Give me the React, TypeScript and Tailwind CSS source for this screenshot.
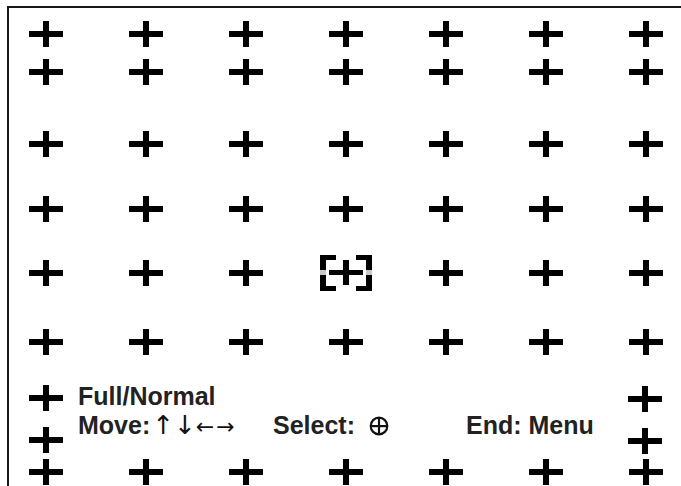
import React from "react";

function Cross() {
  return (
    <svg width="34" height="26" viewBox="0 0 34 26" className="block shrink-0">
      <rect x="0" y="10" width="34" height="6" fill="#000" />
      <rect x="14" y="0" width="6" height="26" fill="#000" />
    </svg>
  );
}

// cursor marker with corner brackets, sits in the middle of the grid
function Marker() {
  return (
    <svg width="52" height="36" viewBox="0 0 52 36" className="block shrink-0">
      <rect x="0" y="0" width="16" height="5" fill="#000" />
      <rect x="0" y="0" width="6" height="15" fill="#000" />
      <rect x="0" y="15" width="6" height="5" fill="#c8c8c8" />
      <rect x="0" y="20" width="6" height="16" fill="#000" />
      <rect x="0" y="31" width="16" height="5" fill="#000" />
      <rect x="36" y="0" width="16" height="5" fill="#000" />
      <rect x="46" y="0" width="6" height="15" fill="#000" />
      <rect x="46" y="15" width="6" height="5" fill="#c8c8c8" />
      <rect x="46" y="20" width="6" height="16" fill="#000" />
      <rect x="36" y="31" width="16" height="5" fill="#000" />
      <rect x="9" y="15" width="34" height="5" fill="#000" />
      <rect x="23" y="5" width="6" height="25" fill="#000" />
    </svg>
  );
}

function Row({ className = "", center }: { className?: string; center?: boolean }) {
  return (
    <div className={`flex h-[26px] w-[654px] items-center justify-between pl-[20px] ${className}`}>
      {[0, 1, 2, 3, 4, 5, 6].map((i) => (
        <div key={i} className="flex h-[26px] w-[34px] items-center justify-center">
          {center && i === 3 ? <Marker /> : <Cross />}
        </div>
      ))}
    </div>
  );
}

export default function App() {
  return (
    <div className="h-[486px] w-[681px] overflow-hidden bg-white font-['Liberation_Sans',Arial,sans-serif]">
      <div className="ml-[7px] mt-[6px] flex h-[480px] flex-col border-l-2 border-t-2 border-[#161616]">
        <Row className="mt-[13px]" />
        <Row className="mt-[12px]" />
        <Row className="mt-[46px]" />
        <Row className="mt-[39px]" />
        <Row className="mt-[38px]" center />
        <Row className="mt-[43px]" />

        {/* menu hints between the side crosses */}
        <div className="flex h-[104px]">
          <div className="ml-[20px] mt-[30px] flex flex-col gap-[16px]">
            <Cross />
            <Cross />
          </div>
          <div className="ml-[15px] mt-[27px] text-[25px] font-bold leading-[29px] text-[#222]">
            <div>Full/Normal</div>
            <div className="flex items-baseline">
              <div className="flex w-[195px] items-baseline font-['DejaVu_Sans',sans-serif] font-normal text-[#111]">
                <span className="font-['Liberation_Sans',Arial,sans-serif] font-bold text-[#222]">Move:</span>
                <span className="ml-[2px] text-[26px] leading-[29px]">↑</span>
                <span className="ml-[0px] text-[26px] leading-[29px]">↓</span>
                <span className="ml-[0px] text-[22px] leading-[29px]">←</span>
                <span className="ml-[2px] text-[22px] leading-[29px]">→</span>
              </div>
              <div className="flex w-[193px] items-baseline">
                <span>Select:</span>
                <svg width="20" height="20" viewBox="0 0 20 20" className="ml-[14px] self-center">
                  <circle cx="10" cy="10" r="8.3" fill="none" stroke="#111" strokeWidth="2.2" />
                  <rect x="2" y="9" width="16" height="2.2" fill="#111" />
                  <rect x="8.9" y="2" width="2.2" height="16" fill="#111" />
                </svg>
              </div>
              <span>End: Menu</span>
            </div>
          </div>
          <div className="ml-auto mr-[19px] mt-[31px] flex flex-col gap-[16px]">
            <Cross />
            <Cross />
          </div>
        </div>

        <Row />
      </div>
    </div>
  );
}
